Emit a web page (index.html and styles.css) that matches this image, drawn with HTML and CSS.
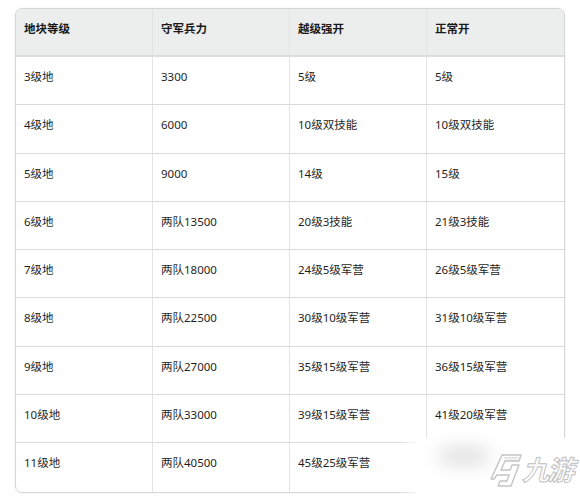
FILE: index.html
```html
<!DOCTYPE html>
<html lang="zh">
<head>
<meta charset="utf-8">
<title>地块等级</title>
<link rel="stylesheet" href="styles.css">
</head>
<body>
<div class="page">
  <table class="grid">
    <thead>
      <tr><th>地块等级</th><th>守军兵力</th><th>越级强开</th><th>正常开</th></tr>
    </thead>
    <tbody>
      <tr><td>3级地</td><td>3300</td><td>5级</td><td>5级</td></tr>
      <tr><td>4级地</td><td>6000</td><td>10级双技能</td><td>10级双技能</td></tr>
      <tr><td>5级地</td><td>9000</td><td>14级</td><td>15级</td></tr>
      <tr><td>6级地</td><td>两队13500</td><td>20级3技能</td><td>21级3技能</td></tr>
      <tr><td>7级地</td><td>两队18000</td><td>24级5级军营</td><td>26级5级军营</td></tr>
      <tr><td>8级地</td><td>两队22500</td><td>30级10级军营</td><td>31级10级军营</td></tr>
      <tr><td>9级地</td><td>两队27000</td><td>35级15级军营</td><td>36级15级军营</td></tr>
      <tr><td>10级地</td><td>两队33000</td><td>39级15级军营</td><td>41级20级军营</td></tr>
      <tr><td>11级地</td><td>两队40500</td><td>45级25级军营</td><td>47级25级军营</td></tr>
    </tbody>
  </table>
  <div class="watermark">
    <span class="smudge"></span>
    <svg class="logo-mark" width="32" height="38" viewBox="0 0 32 38">
      <path d="M12 2 H31 L29 8 H15 L11 17 H20 L22 12 H29 L21 33 H8 L10 28 H17 L19 22 H7 L4 26 H1 Z" fill="none" stroke="#c4c4c4" stroke-width="1.4" stroke-linejoin="round"/>
      <path d="M14 4.5 H27.5 L26.8 6 H14" fill="none" stroke="#d6d6d6" stroke-width="0.8"/>
    </svg>
    <span class="logo-text">九游</span>
  </div>
</div>
</body>
</html>
```
FILE: styles.css
```css
html, body {
  margin: 0;
  padding: 0;
  background: #ffffff;
}

body {
  font-family: "Noto Sans", "Noto Sans CJK SC", sans-serif;
  font-size: 11.5px;
  color: #1f1f1f;
}

.page {
  position: relative;
  width: 580px;
  height: 499px;
  overflow: hidden;
  padding: 8px 15px 0 15px;
  box-sizing: border-box;
}

.grid {
  width: 550px;
  border-collapse: separate;
  border-spacing: 0;
  table-layout: fixed;
  border: 1px solid #d4d6d6;
  border-radius: 7px;
  box-shadow: 0 0 2px rgba(0, 0, 0, 0.08);
  overflow: hidden;
}

.grid th,
.grid td {
  box-sizing: border-box;
  height: 48.3px;
  padding: 13px 8px 0 8px;
  vertical-align: top;
  text-align: left;
  line-height: 14px;
  border-right: 1px solid #e2e3e3;
  border-bottom: 1px solid #d9dada;
}

.grid th:last-child,
.grid td:last-child {
  border-right: none;
}

.grid tbody tr:last-child td {
  border-bottom: none;
}

.grid th {
  height: 48px;
  background: #eceeee;
  font-weight: 700;
  color: #1a1a1a;
  border-bottom: 2px solid #dcdede;
}

.watermark {
  position: absolute;
  left: 398px;
  top: 438px;
  width: 182px;
  height: 61px;
  background: linear-gradient(90deg, rgba(255,255,255,0) 0px, #ffffff 24px);
}

.smudge {
  position: absolute;
  left: 38px;
  top: 10px;
  width: 56px;
  height: 16px;
  border-radius: 50%;
  background: rgba(0, 0, 0, 0.14);
  filter: blur(9px);
}

.logo-mark {
  position: absolute;
  left: 92px;
  top: 15px;
}

.logo-text {
  position: absolute;
  left: 127px;
  top: 15px;
  font-family: "Noto Sans CJK SC", sans-serif;
  font-size: 27px;
  font-weight: 700;
  line-height: 32px;
  color: #ffffff;
  -webkit-text-stroke: 1px #c0c0c0;
  transform: skewX(-14deg);
  letter-spacing: -2px;
}
```
